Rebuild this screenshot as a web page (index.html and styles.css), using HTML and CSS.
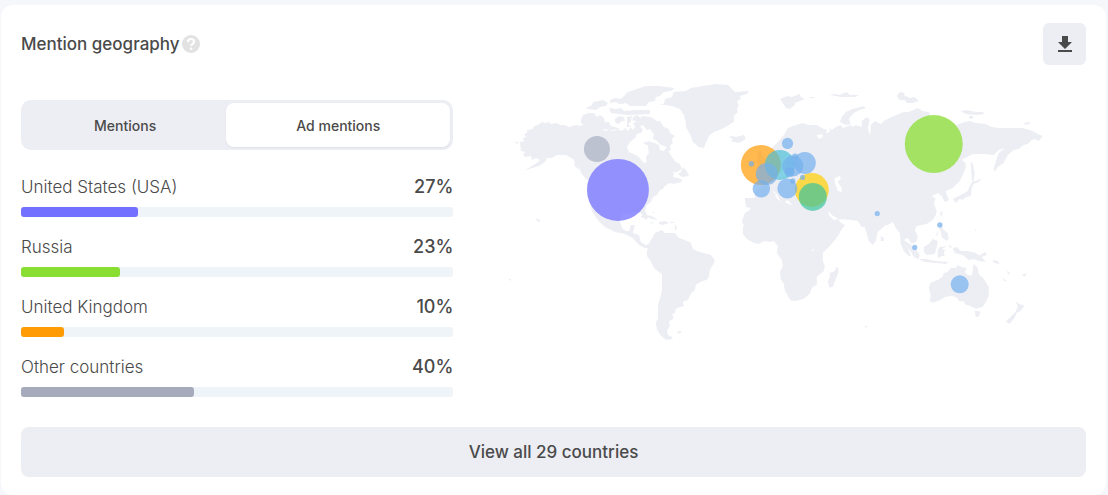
FILE: index.html
```html
<!DOCTYPE html>
<html lang="en">
<head>
  <meta charset="UTF-8">
  <meta name="viewport" content="width=device-width, initial-scale=1.0">
  <title>Mention geography</title>
  <link rel="stylesheet" href="styles.css">
</head>
<body>
  <section class="card">
    <header class="card-header">
      <h2>Mention geography</h2>
      <button class="help" type="button" aria-label="Help">
        <svg width="18" height="18" viewBox="0 0 18 18">
          <circle cx="9" cy="9" r="9" fill="#e2e2e2"/>
          <path d="M5.9 7.2C5.9 5.1 7.2 4 9 4s3.1 1.1 3.1 2.7c0 2.2-3 2.1-3 4.4" fill="none" stroke="#fff" stroke-width="2"/>
          <circle cx="9.1" cy="13.7" r="1.3" fill="#fff"/>
        </svg>
      </button>
      <button class="download" type="button" aria-label="Download">
        <svg width="16" height="18" viewBox="0 0 16 18">
          <path d="M5 1h6v6h4l-7 7-7-7h4z" fill="#4a4a4a"/>
          <path d="M1 15h14v2H1z" fill="#4a4a4a"/>
        </svg>
      </button>
    </header>

    <div class="content">
      <div class="stats">
        <div class="tabs">
          <button type="button">Mentions</button>
          <button type="button" class="active">Ad mentions</button>
        </div>
        <ul class="countries">
          <li>
            <div class="row"><span>United States (USA)</span><strong>27%</strong></div>
            <div class="bar"><div class="fill usa" style="width: 27%"></div></div>
          </li>
          <li>
            <div class="row"><span>Russia</span><strong>23%</strong></div>
            <div class="bar"><div class="fill russia" style="width: 23%"></div></div>
          </li>
          <li>
            <div class="row"><span>United Kingdom</span><strong>10%</strong></div>
            <div class="bar"><div class="fill uk" style="width: 10%"></div></div>
          </li>
          <li>
            <div class="row"><span>Other countries</span><strong>40%</strong></div>
            <div class="bar"><div class="fill other" style="width: 40%"></div></div>
          </li>
        </ul>
      </div>

      <svg class="map" viewBox="487 75 599 275" role="img" aria-label="World map of mentions">
        <g class="land">
          <!-- North America -->
          <path d="M520 142l4-1-1-3 3-1-2-3 3-1v-3l6-1 1-3 4-1 4-3 3 1 4-1 2 2 5-1 5 2 4 0 4 2 7-2 4 1 5-2 4 2 4 0 3 2 5 0 4 3 4-1 5 1 4-2 4 2 3-3 3 3 3-4 2 3 3-5 4 1 3 4-2 3-4 1-2 4-5 4-3 5 2 5 9 4 4 5 2 2 3-1-1-5 3-4-1-6 2-5 5 1 4 2 1 5 4 1 3-4 3 7 5 7 5 3 2 5-5 3-8 1 5 0-1 4 5 1 5 2-2 2-7 2-4-1-5 3-2 3-3 1-3 5-4 2-2 5-4 3-2 5 3 7-1 3-3-2-3-5-8-1-10 2-3 7 2 7 4 3 3 0 2-6 4 0-2 8 6 2 2 7 5 3 4-2-1 5-4 0-6-3-6-7-8-4-10-2-10-5-8-8-5-8-3-10-1-11v-9l-5-6-5-9-5-7-7-4-9 0-5 3-5 0-2 4-6 4-7 2-8 3 8-5 6-4 2-2-4-2-4 2-1-4-6 1-2-3 3-2-5-1z"/>
          <path d="M683 167l4 4 2 5-7 1-4-3 3-2zM574 161l4 4 1 5-4-4zM580 170l4 2 2 5-4-3zM515 142l4 0-2 2z"/>
          <path d="M659 105l5-1 1-5 7-2 2-5 12-1 5-3 12-2 13-2 12 1 5 5 2 2 14-1-2 3-7 2 1 3-4 2 2 4-2 4 1 3-4 4 0 6-5 3-7 4-8 3-5 4-3 7-2 5-5-1-6-5-2-6-5-9 0-4-2-8-4-6-8-3-8-1z"/>
          <path d="M625 95l3-3 9-3 9-3 12 0 17 2-4 3-7 1-4 4-4 1-1 4-6 1-3 4-16 0-4-3-4 1-2-4z"/>
          <path d="M632 122l1-5 4-2 4 3 1-2 9 1 6 4 3 0 4 6 5 2 1 4 5 3-3 3 1 4-3 3 1 4-4 2 0-5-6-2-5-5-3-1 1-5-4-5-3 1-4-5-4 2-4-1-2-3 4-1-4-2z"/>
          <path d="M583 115l6-2 5 0 3 4 3-2 4 3 1 4 4 0 2 4 7 2 2 1-8 1-13-1-5-2-6 1-3-3-4-2 0-3zM586 108l6-3 1-3 10-2 5 3-2 3-6 1-4 3-8-1zM610 100l5-2 7 1 3 4-6 1-3-2-6 1zM609 108l7 1 5-1 3 3 12-1 14 0v4l-22 1-9-1-8-1zM615 119l4-3 5 1 1 4-3 0-4 3-3-2zM627 117l5-1-1 6-3 2 3 3-4 0zM623 98l6 1 1 4-6-1zM643 143l6-2 4 2-4 3z"/>
          <path d="M641 216l5-1 6 1 6 4-6-1-5-2-5 1zM659 222l6-1 4 2-6 2-4-1zM650 222l4 1-2 1zM670 222l4 0v1h-4zM653 211l2 3-2-1zM675 224l2 3-1 4-1-2z"/>
          <!-- South America -->
          <path d="M652 239l3-6 7-3 3 3 10 0 4 5 6 2 6 3 2 6 4 2 14 4 4 5-1 3-4 7-1 7-2 3-6 2-5 3-1 5-4 4-3 6-5 2 1 4-8 3-1 4-3 2 2 3-5 4 1 4-3 5 1 4 5 3-3 2-4 0-5-4-4-6-1-7 2-4 0-14 2-6 2-8 0-17-7-5-5-9-3-4 0-6 2-3 1-6z"/>
          <path d="M677 332l4-1 1 1-3 2zM536 218l4 2v2l-3-1zM512 268l3 1zM508 280l3-1v2z"/>
          <!-- Africa -->
          <path d="M753 198l3-1 4 0 14-4 2 1-1 4 6 3 6 2 5 2 1-4 5 1 10 2 4-1 5 9 4 6 3 8 5 6 11-2 0 3-4 6-6 7-7 7 0 8 2 5-1 5-7 6 0 8-5 3-2 6-6 5-7 2-6 0-3-5-3-5-1-7-3-4-1-8 3-6-1-6-5-7 1-7-4-5-3 1-6-1-6 3-5-1-7-4-4-5 0-6 1-3-2-3 3-9 5-3z"/>
          <path d="M837 266l2 5-4 11-2 5-3 1-2-6 2-5 0-4 5-2zM729 137l3-1 4 1 8-2 2 4-7 4-8-2 2-2zM757 151l4 0 3 6 4 7-3 3-9 2 4-5-4-1 2-4zM751 161l4 0 0 5-5 1z"/>
          <!-- Europe and Asia -->
          <path d="M773 147l5-5 6-7 4-7 8-3 7-2 6 2 8 0 5 3 5 2-1 4-9 1 2 4 4-2 0-3 7-2 0-4 2 2 4-3 5-2 2 3 8-3 2 2 3-2 6 2 0-6 5-4 3 3-2 8 2 7 1-4 0-6 4-4 6 3 3-3 8-4 12-5 5 0 9-4 5 3 6 1 2 4-3 3 9 1 9-1 6 4 5 2 8-3 5-1 6 2 10 1 6 3 7 1 12 0 12 0 10 3 5 3 5 2-4 5-4-2-3 1-4 4-4 1-5 4-5 1-6 5-4 8-6 4-3 5-1-4 2-6 3-9 6-5-6 2-5 5-9-1-12 0-11 6 4 3 0 4-2 6-4 8-7 7-7 3 1 4 2 4-1 2-3 1-3-6-4-3-6 3 4 3-2 4 3 8-1 4-3 5-6 4-5 1-5 1-2 4 3 6-1 5-5 3-4-6-3 1 0 5 4 6 2 6-2 0-5-5-3-7-1-11-4-5-3-6-5 3-2 0-8 7-2 9-3 4-4-4-2-7-2-7-3 0-4-6-6-1-13-1-7-4-3-4 0 4 5 5 5-1 1 3 5 3-4 6-8 4-8 4-5 0-3-7-8-14-1-10-14-1-6-7-3 2 0 4-3-3-5-9-4-3 3 6 4 5-4 0-7-7-6 1-4 8-8 4-5-1-1-9 11 0-2-6 7-4 7-7 2-5 6 3 10-3 4-6 5-4-8-2 1-8 4-4-4 2-5 6 2 6-4 7-4-2-2-7-6 2z"/>
          <path d="M780 99l5-2 3-1 4 1 8-3 1 3 4 2-5 2-5 2 0 2-5 4-4-1-3-5zM810 97h5v1h-5zM830 95l6-1 3 1 8-3 3 3 9 0-4 2-6 0-8 0-5-1zM840 122l2-5 4-5 7-3 11-3 2 2-6 2-6 3-5 6 2 5-5 1zM835 130l3-3 2 3zM897 96l3-4 5 1-1 2 6 3 5-1 4 4-6 2-6 0-2-3-5 0zM961 111l6-1 9 2 7 0 2 2-9 1-10-1zM969 116l4 0 1 2-4 1zM1024 123l6-1 1 1-5 2zM971 161l2 3 2 9-1 8-2-1z"/>
          <path d="M973 181l3 0 6-3-3 4-5 2-2 4-1 8-5 1-3 3-3-1-4 4-3-4 6-3 4-2 5-3 2-5zM940 213l3-2-1 6zM881 236l3 2 0 3-3 0z"/>
          <!-- Islands of South-East Asia, Australia -->
          <path d="M940 223l3 0 0 6 5 4 1 6-2 2-5-4-1-6-2-3zM936 235l4-5-3 6zM903 240l6 3 7 6 4 6-1 4-4-1-5-8-5-5zM919 259l8 0 8 2 14 1-3 2-9-1-12-1zM924 247l5-3 4-5 5 2-1 6-2 7-8 1-3-3zM938 250l2-3 7-1-5 3 4 1-2 2 1 4-4 0-1 2-2-1zM949 245l3 1-1 3zM953 248l4-1 4 4 7 0 8 2 6 4 4 5-7-1-5-2-5 1-6-5-8-2zM980 255l6-3 1 3-5 2zM992 260l6 1 2 3-5-1zM1007 271l3 1-1 3zM1003 278l5 4-4-1zM1022 275l5-2-2 4zM975 231l2-4-1 4z"/>
          <path d="M931 283l7-3 5-3 1-4 4-1 3-4 5 0 2-3 4 2 5 1-2 4 3 3 4 1 1-6 1-6 4 4 1 6 5 5 5 8 0 9-2 5-4 6-7 2-6-3-4-1-3-4-3 1-3-4-4-2-7 1-7 4-6 2-3-2 1-5-2-8zM975 311l6 1-2 5-3 0zM1016 301l3 3 6 2-4 5-4 2-2 5-5 6-4-2 4-4 6-6 2-5zM864 327l4-1-1 2z"/>
        </g>
        <g class="water">
          <path d="M835 178l5-2 1 3-3 3 4 6 0 4-4-1-3-8zM812 250l2-1-1 3z"/>
        </g>
        <g class="bubbles">
          <circle class="b-usa" cx="618" cy="190" r="31"/>
          <circle class="b-gray" cx="597" cy="149" r="13"/>
          <circle class="b-russia" cx="934" cy="144" r="29"/>
          <circle class="b-uk" cx="761" cy="165" r="20"/>
          <circle class="b-yellow" cx="812" cy="190" r="17"/>
          <circle class="b-green" cx="813" cy="197" r="14"/>
          <circle class="b-teal" cx="780" cy="165" r="15"/>
          <circle cx="767" cy="174" r="11"/>
          <circle cx="805" cy="163" r="11"/>
          <circle cx="793" cy="166" r="10.5"/>
          <circle cx="787.5" cy="188.5" r="10"/>
          <circle cx="761.5" cy="189" r="8.7"/>
          <circle cx="960" cy="284.5" r="9"/>
          <circle cx="787.7" cy="143.5" r="5.6"/>
          <circle cx="789.7" cy="172.3" r="5"/>
          <circle cx="795.3" cy="156.5" r="3"/>
          <circle cx="793" cy="181" r="2.6"/>
          <circle cx="802.7" cy="177.5" r="2.6"/>
          <circle cx="751.5" cy="163.7" r="2.6"/>
          <circle cx="877.5" cy="213.7" r="2.6"/>
          <circle cx="940" cy="225" r="2.6"/>
          <circle cx="915" cy="247.5" r="2.6"/>
        </g>
      </svg>
    </div>

    <button class="view-all" type="button">View all 29 countries</button>
  </section>
</body>
</html>
```

FILE: styles.css
```css
* {
  box-sizing: border-box;
}

body {
  margin: 5px 2px 0 1px;
  background-color: #f6f7fb;
  color: #4a4a4a;
  font-family: Inter, "Open Sans", sans-serif;
}

button {
  border: none;
  padding: 0;
  font-family: inherit;
  color: inherit;
  cursor: pointer;
}

svg {
  display: block;
}

.card {
  padding: 18px 20px 18px;
  background-color: #fff;
  border-radius: 12px;
}

.card-header {
  display: flex;
  align-items: center;
}

h2 {
  margin: 0;
  font-size: 17px;
  line-height: 20px;
  font-weight: 500;
}

.help {
  margin-left: 2px;
  background: none;
}

.download {
  display: flex;
  align-items: center;
  justify-content: center;
  width: 43px;
  height: 42px;
  margin-left: auto;
  background-color: #edeef4;
  border-radius: 6px;
}

.content {
  display: grid;
  grid-template-columns: minmax(0, 13fr) minmax(0, 18fr);
  gap: 34px;
  align-items: start;
  margin-top: 10px;
}

.stats {
  padding-top: 25px;
}

.tabs {
  display: flex;
  height: 50px;
  padding: 3px;
  background-color: #edeef4;
  border-radius: 10px;
}

.tabs button {
  flex: 1 1 auto;
  font-size: 14px;
  font-weight: 500;
  background: none;
  border-radius: 8px;
}

.tabs .active {
  background-color: #fff;
  box-shadow: 0 1px 2px rgba(0, 0, 0, 0.06);
}

.countries {
  display: grid;
  gap: 20px;
  margin: 27px 0 0;
  padding: 0;
  list-style: none;
}

.row {
  display: flex;
  justify-content: space-between;
  font-size: 17px;
  line-height: 20px;
  font-weight: 300;
}

.row strong {
  font-size: 18px;
  font-weight: 500;
}

.bar {
  height: 10px;
  margin-top: 10px;
  background-color: #eff4f9;
  border-radius: 3px;
}

.fill {
  height: 100%;
  border-radius: 3px;
}

.usa {
  background-color: #7370ff;
}

.russia {
  background-color: #8add32;
}

.uk {
  background-color: #ff9b04;
}

.other {
  background-color: #a6abbb;
}

.map {
  width: 100%;
}

.land {
  fill: #edeef4;
}

.water {
  fill: #fff;
}

.bubbles {
  fill: #74afed;
  fill-opacity: 0.7;
}

.b-usa {
  fill: #7370ff;
  fill-opacity: 0.75;
}

.b-gray {
  fill: #a6afc0;
}

.b-russia {
  fill: #8add32;
  fill-opacity: 0.75;
}

.b-uk {
  fill: #ff9b04;
}

.b-yellow {
  fill: #ffce00;
}

.b-green {
  fill: #3ac49f;
}

.b-teal {
  fill: #4dbfd9;
}

.view-all {
  display: block;
  width: 100%;
  height: 50px;
  margin-top: 30px;
  font-size: 17px;
  font-weight: 500;
  background-color: #edeef4;
  border-radius: 8px;
}
```
